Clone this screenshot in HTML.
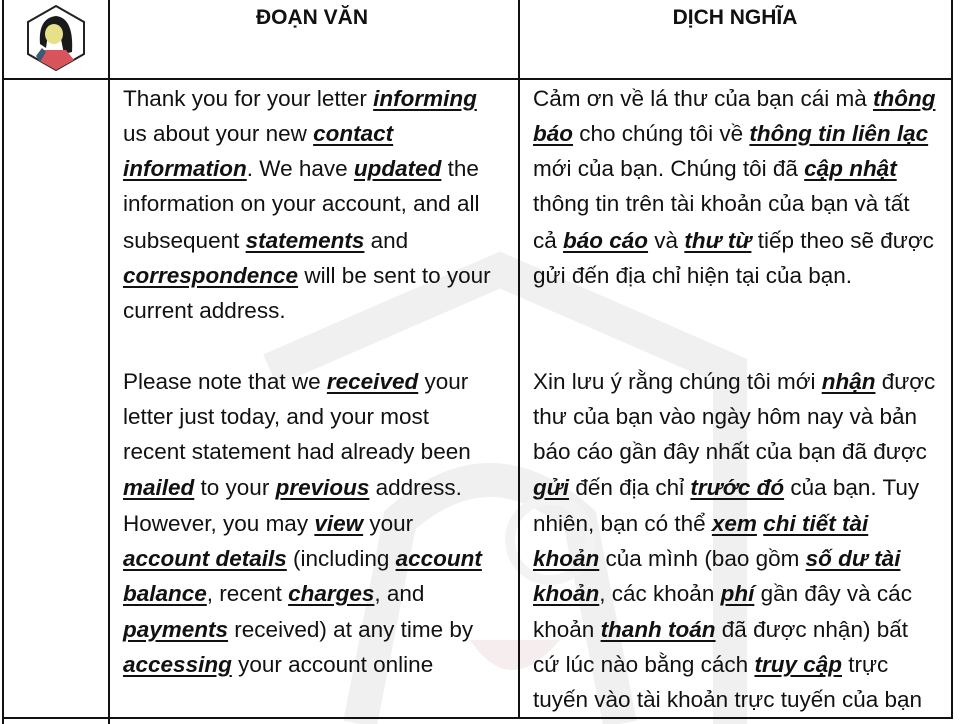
<!DOCTYPE html>
<html><head><meta charset="utf-8"><style>
body{margin:0;width:960px;height:724px;background:#fff;position:relative;overflow:hidden;font-family:"Liberation Sans",sans-serif;color:#111}
.v{position:absolute;top:0;width:2px;background:#111}
.h{position:absolute;height:2px;background:#111}
.l{position:absolute;white-space:nowrap;font-size:22.5px;line-height:26px;letter-spacing:0}
.u{text-decoration:underline;text-underline-offset:3px;font-weight:bold;font-style:italic}
.hd{position:absolute;top:6px;font-weight:bold;font-size:21px;transform:translateX(-50%)}
</style></head><body>
<svg style="position:absolute;left:230px;top:240px" width="520" height="484" viewBox="0 0 520 484">
<g fill="none" stroke="#f0f0f0" stroke-width="34">
<path d="M40 130 L270 30 L500 130 L500 484"/>
<path d="M130 484 L170 280 Q260 200 350 280 L390 484"/>
</g>
<circle cx="320" cy="300" r="40" fill="none" stroke="#f3f3f3" stroke-width="10"/>
<path d="M240 400 Q280 460 330 400" fill="#f6eeee"/>
</svg>
<div class="v" style="left:2px;height:724px"></div>
<div class="v" style="left:108px;height:724px"></div>
<div class="v" style="left:518px;height:718px"></div>
<div class="v" style="left:951px;height:718px"></div>
<div class="h" style="left:2px;top:78px;width:951px"></div>
<div class="h" style="left:2px;top:717px;width:951px"></div>
<svg style="position:absolute;left:24px;top:4px" width="64" height="68" viewBox="0 0 64 68">
<polygon points="32,2 60,18 60,50 32,66 4,50 4,18" fill="#fff" stroke="#222" stroke-width="2"/>
<path d="M16 40 Q14 14 32 12 Q50 14 48 48 L40 50 L36 30 L24 30 L22 44 Z" fill="#1a1a1a"/>
<ellipse cx="30" cy="30" rx="9" ry="10" fill="#e6e08a"/>
<path d="M14 56 L20 46 L42 46 L50 56 L32 66 Z" fill="#d9545a"/>
<path d="M12 52 L18 44 L22 48 L16 58 Z" fill="#3a5a78"/>
</svg>
<div class="hd" style="left:312px">ĐOẠN VĂN</div>
<div class="hd" style="left:735px">DỊCH NGHĨA</div>

<div class="l" style="left:123px;top:86px">Thank you for your letter <span class="u">informing</span></div>
<div class="l" style="left:123px;top:121px">us about your new <span class="u">contact</span></div>
<div class="l" style="left:123px;top:156px"><span class="u">information</span>. We have <span class="u">updated</span> the</div>
<div class="l" style="left:123px;top:191px">information on your account, and all</div>
<div class="l" style="left:123px;top:228px">subsequent <span class="u">statements</span> and</div>
<div class="l" style="left:123px;top:263px"><span class="u">correspondence</span> will be sent to your</div>
<div class="l" style="left:123px;top:298px">current address.</div>
<div class="l" style="left:123px;top:369px">Please note that we <span class="u">received</span> your</div>
<div class="l" style="left:123px;top:404px">letter just today, and your most</div>
<div class="l" style="left:123px;top:439px">recent statement had already been</div>
<div class="l" style="left:123px;top:475px"><span class="u">mailed</span> to your <span class="u">previous</span> address.</div>
<div class="l" style="left:123px;top:511px">However, you may <span class="u">view</span> your</div>
<div class="l" style="left:123px;top:546px"><span class="u">account details</span> (including <span class="u">account</span></div>
<div class="l" style="left:123px;top:581px"><span class="u">balance</span>, recent <span class="u">charges</span>, and</div>
<div class="l" style="left:123px;top:617px"><span class="u">payments</span> received) at any time by</div>
<div class="l" style="left:123px;top:652px"><span class="u">accessing</span> your account online</div>

<div class="l" style="left:533px;top:86px">Cảm ơn về lá thư của bạn cái mà <span class="u">thông</span></div>
<div class="l" style="left:533px;top:121px"><span class="u">báo</span> cho chúng tôi về <span class="u">thông tin liên lạc</span></div>
<div class="l" style="left:533px;top:156px">mới của bạn. Chúng tôi đã <span class="u">cập nhật</span></div>
<div class="l" style="left:533px;top:191px">thông tin trên tài khoản của bạn và tất</div>
<div class="l" style="left:533px;top:228px">cả <span class="u">báo cáo</span> và <span class="u">thư từ</span> tiếp theo sẽ được</div>
<div class="l" style="left:533px;top:263px">gửi đến địa chỉ hiện tại của bạn.</div>
<div class="l" style="left:533px;top:369px">Xin lưu ý rằng chúng tôi mới <span class="u">nhận</span> được</div>
<div class="l" style="left:533px;top:404px">thư của bạn vào ngày hôm nay và bản</div>
<div class="l" style="left:533px;top:439px">báo cáo gần đây nhất của bạn đã được</div>
<div class="l" style="left:533px;top:475px"><span class="u">gửi</span> đến địa chỉ <span class="u">trước đó</span> của bạn. Tuy</div>
<div class="l" style="left:533px;top:511px">nhiên, bạn có thể <span class="u">xem</span> <span class="u">chi tiết tài</span></div>
<div class="l" style="left:533px;top:546px"><span class="u">khoản</span> của mình (bao gồm <span class="u">số dư tài</span></div>
<div class="l" style="left:533px;top:581px"><span class="u">khoản</span>, các khoản <span class="u">phí</span> gần đây và các</div>
<div class="l" style="left:533px;top:617px">khoản <span class="u">thanh toán</span> đã được nhận) bất</div>
<div class="l" style="left:533px;top:652px">cứ lúc nào bằng cách <span class="u">truy cập</span> trực</div>
<div class="l" style="left:533px;top:687px">tuyến vào tài khoản trực tuyến của bạn</div>
</body></html>
